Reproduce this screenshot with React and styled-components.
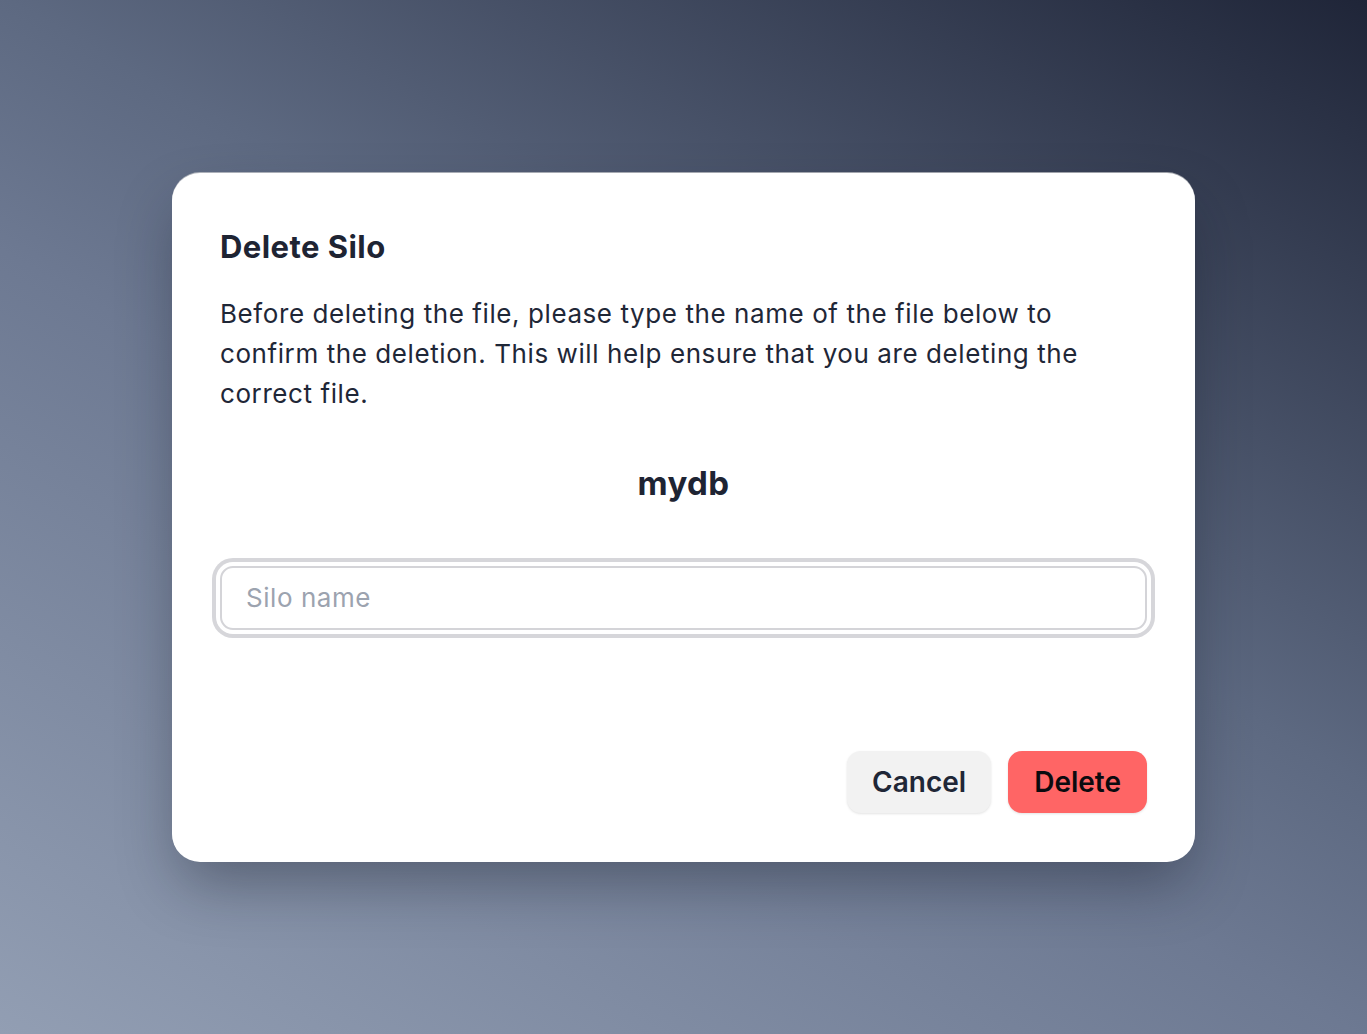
import React from "react";
import styled, { createGlobalStyle } from "styled-components";

const GlobalStyle = createGlobalStyle`
  * { box-sizing: border-box; }
  html, body { margin: 0; padding: 0; }
  body {
    font-family: Inter, "Noto Sans", "Liberation Sans", sans-serif;
    -webkit-font-smoothing: antialiased;
  }
`;

const Page = styled.div`
  min-height: 100vh;
  display: flex;
  align-items: center;
  justify-content: center;
  background: linear-gradient(
    30deg,
    #929eb3 0%,
    #6d7992 43%,
    #5d6981 57%,
    #1f2538 100%
  );
`;

const Modal = styled.div`
  width: 1023px;
  background: #ffffff;
  border-radius: 28px;
  padding: 48px 48px 49px;
  display: flex;
  flex-direction: column;
  box-shadow: 0 -1px 0 0 rgba(215, 215, 215, 0.65),
    0 28px 60px -8px rgba(15, 20, 35, 0.38);
`;

const Title = styled.h2`
  margin: 0;
  font-size: 31px;
  line-height: 52px;
  font-weight: 700;
  color: #1e2433;
  letter-spacing: 0.45px;
`;

const Description = styled.p`
  margin: 21px 0 0;
  font-size: 26px;
  line-height: 40px;
  font-weight: 400;
  color: #1f2737;
  letter-spacing: 0.58px;
`;

const FileName = styled.div`
  margin-top: 49px;
  text-align: center;
  font-size: 33px;
  line-height: 40px;
  font-weight: 700;
  color: #1e2433;
  letter-spacing: 0.4px;
`;

const Input = styled.input`
  margin-top: 63px;
  width: 100%;
  height: 64px;
  border: 2px solid #d4d4d8;
  border-radius: 13px;
  padding: 0 24px;
  font-family: inherit;
  font-size: 26px;
  letter-spacing: 0.55px;
  color: #1f2737;
  background: #fff;
  outline: none;
  box-shadow: 0 0 0 4px #ffffff, 0 0 0 8px #d6d6da;

  &::placeholder {
    color: #9ca3af;
  }
`;

const Actions = styled.div`
  margin-top: 121px;
  display: flex;
  justify-content: flex-end;
  gap: 17px;
`;

const Button = styled.button`
  height: 62px;
  padding: 0 ${(p) => (p.$danger ? "26px" : "25px")};
  border: none;
  border-radius: 14px;
  font-family: inherit;
  font-size: 28px;
  font-weight: 600;
  cursor: pointer;
  background: ${(p) => (p.$danger ? "#ff6565" : "#f2f2f2")};
  color: ${(p) => (p.$danger ? "#0b0b0f" : "#1f2737")};
  box-shadow: 0 1px 3px rgba(0, 0, 0, 0.08), 0 1px 2px rgba(0, 0, 0, 0.04);
`;

export default function App() {
  return (
    <>
      <GlobalStyle />
      <Page>
        <Modal>
          <Title>Delete Silo</Title>
          <Description>
            Before deleting the file, please type the name of the file below to
            confirm the deletion. This will help ensure that you are deleting the
            correct file.
          </Description>
          <FileName>mydb</FileName>
          <Input placeholder="Silo name" />
          <Actions>
            <Button>Cancel</Button>
            <Button $danger>Delete</Button>
          </Actions>
        </Modal>
      </Page>
    </>
  );
}
